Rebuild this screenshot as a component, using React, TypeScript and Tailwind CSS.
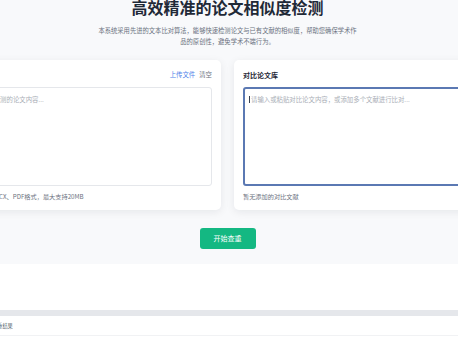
const FONT = "font-['Noto_Sans_CJK_SC','Noto_Sans',sans-serif]";

function UploadCard() {
  return (
    <div className="flex w-[288px] flex-col rounded-[5px] bg-white px-[9px] pt-[9px] pb-[9px] shadow-[0_2px_8px_rgba(15,23,42,0.08)]">
      <div className="flex h-[12px] items-center justify-between">
        <span className="text-[7px] font-bold text-[#1f2937]">待检测论文</span>
        <div className="flex gap-[4px] text-[6.4px]">
          <span className="text-[#4f7fe8]">上传文件</span>
          <span className="text-[#6b7280]">清空</span>
        </div>
      </div>
      <div className="mt-[6px] h-[99px] rounded-[3px] border border-[#e5e7eb] px-[6px] py-[7px] text-[6.4px] leading-[9px] text-[#a9aeb6]">
        请输入或粘贴待检测的论文内容...
      </div>
      <div className="mt-[6px] text-[6.2px] leading-[9px] text-[#6b7280]">
        支持TXT、DOC、DOCX、PDF格式，最大支持20MB
      </div>
    </div>
  );
}

function LibraryCard() {
  return (
    <div className="flex w-[288px] flex-col rounded-[5px] bg-white px-[9px] pt-[9px] pb-[9px] shadow-[0_2px_8px_rgba(15,23,42,0.08)]">
      <div className="flex h-[12px] items-center">
        <span className="text-[7px] font-bold text-[#1f2937]">对比论文库</span>
      </div>
      <div className="mt-[6px] flex h-[99px] items-start rounded-[3px] border-2 border-[#5b79b3] px-[4px] py-[6px] text-[6.4px] leading-[9px] text-[#a9aeb6]">
        <span className="mr-[1px] mt-[1px] h-[7px] w-[1px] bg-[#374151]" />
        请输入或粘贴对比论文内容，或添加多个文献进行比对...
      </div>
      <div className="mt-[6px] text-[6.2px] leading-[9px] text-[#6b7280]">暂无添加的对比文献</div>
    </div>
  );
}

export default function App() {
  return (
    <div className={`${FONT} h-[344px] w-[458px] overflow-hidden bg-white`}>
      <div className="bg-[#f8f9fb]">
        <div className="ml-[-67px] flex w-[589px] flex-col items-center">
          <h1 className="mt-[-2px] text-[16px] font-bold leading-[18px] text-[#1f2937]">
            高效精准的论文相似度检测
          </h1>
          <p className="mt-[9px] whitespace-nowrap text-center text-[6.3px] leading-[11px] text-[#6b7280]">
            本系统采用先进的文本比对算法，能够快速检测论文与已有文献的相似度，帮助您确保学术作
            <br />
            品的原创性，避免学术不端行为。
          </p>
          <div className="mt-[13px] flex w-full gap-[13px]">
            <UploadCard />
            <LibraryCard />
          </div>
          <button className="mt-[18px] h-[21px] w-[56px] rounded-[3px] bg-[#14b882] text-[7px] text-white">
            开始查重
          </button>
          <div className="h-[15px]" />
        </div>
      </div>
      <div className="h-[46px] bg-white" />
      <div className="h-[6px] bg-[#e5e7eb]" />
      <div className="flex h-[20px] items-center border-b border-[#f1f2f4]">
        <span className="ml-[-8px] text-[5.2px] text-[#4b5563]">查重结果</span>
      </div>
    </div>
  );
}
